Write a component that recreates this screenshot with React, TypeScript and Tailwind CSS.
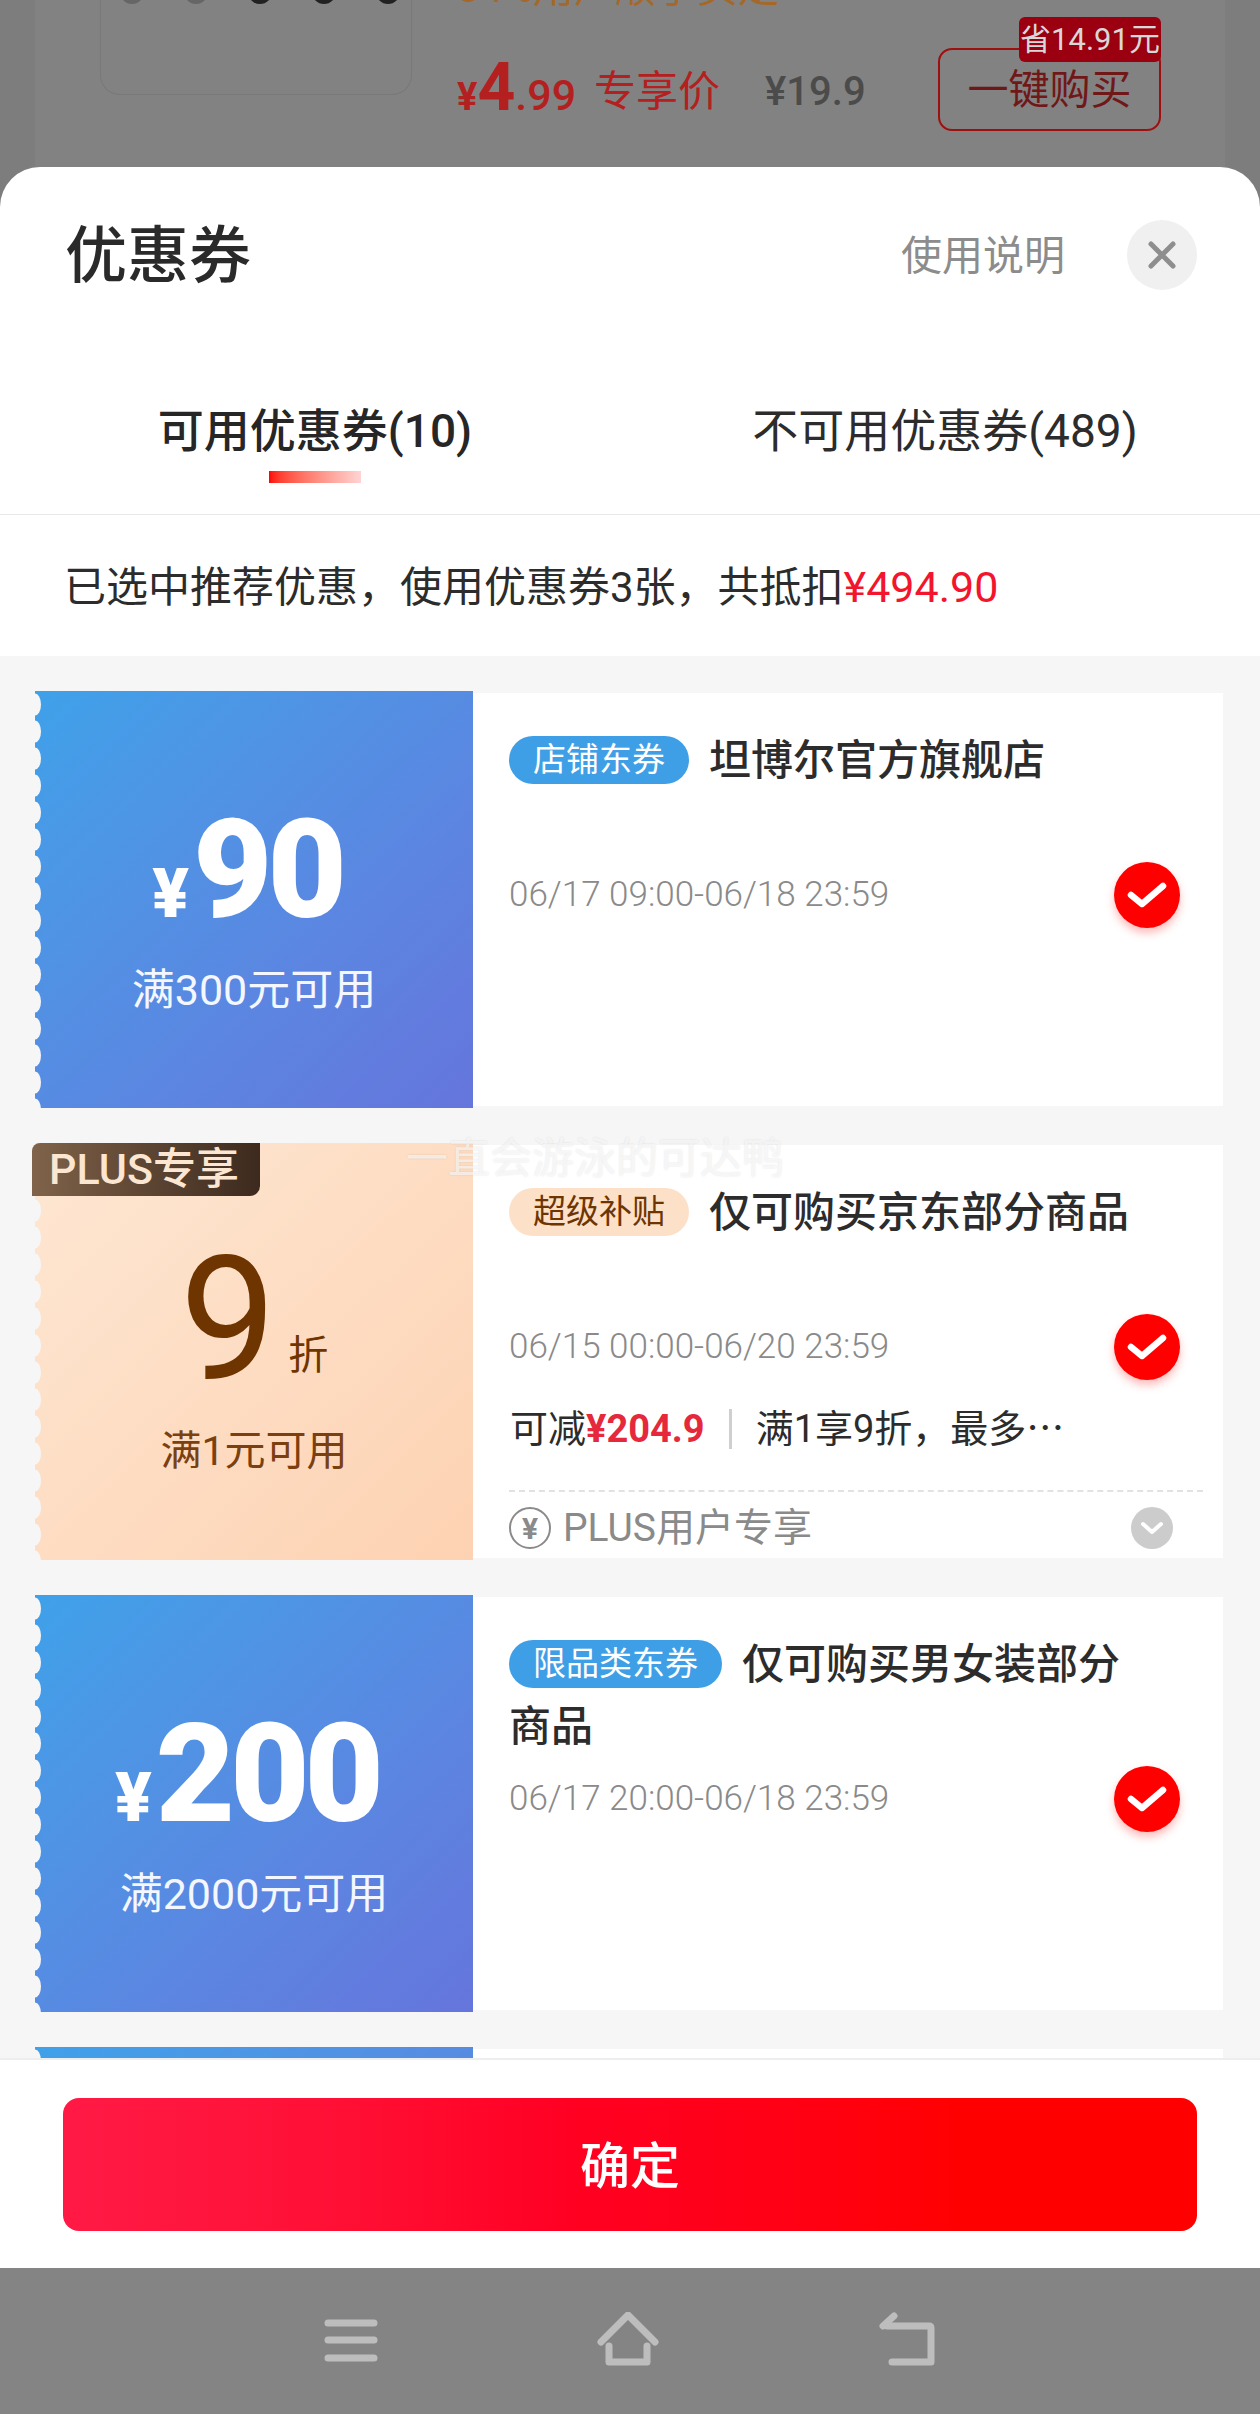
const Scallops = ({ id }: { id: string }) => (
  <svg className="absolute left-0 top-0 h-full w-[8px]" aria-hidden="true">
    <defs>
      <pattern id={id} width="8" height="27" patternUnits="userSpaceOnUse">
        <ellipse cx="0" cy="13.5" rx="6" ry="11" fill="#f6f6f6" />
      </pattern>
    </defs>
    <rect width="8" height="100%" fill={`url(#${id})`} />
  </svg>
);

function Check() {
  return (
    <div className="flex h-[66px] w-[66px] shrink-0 items-center justify-center rounded-full bg-[#ff0000] shadow-[0_5px_8px_rgba(255,60,60,0.35)]">
      <svg width="40" height="30" viewBox="0 0 40 30" fill="none">
        <path d="M4 15l11 9L36 6" stroke="#fff" strokeWidth="6.5" strokeLinecap="round" strokeLinejoin="round" />
      </svg>
    </div>
  );
}

function Card({
  id,
  peach,
  left,
  tag,
  tagClass,
  title,
  date,
  children,
}: {
  id: string;
  peach?: boolean;
  left: React.ReactNode;
  tag: string;
  tagClass: string;
  title: React.ReactNode;
  date: string;
  children?: React.ReactNode;
}) {
  return (
    <div className="ml-[35px] flex h-[417px] w-[1188px] shrink-0">
      <div
        className={
          peach
            ? "relative flex h-full w-[438px] shrink-0 flex-col items-center bg-gradient-to-br from-[#fee7d3] to-[#fdd2b2]"
            : "relative flex h-full w-[438px] shrink-0 flex-col items-center bg-gradient-to-br from-[#3ea1e9] to-[#6575dc]"
        }
      >
        {left}
        <Scallops id={id} />
      </div>
      <div className="my-[2px] flex-1 overflow-hidden bg-white pl-[36px] pt-[37px]">
        <div className="h-[124px] pr-[40px] text-[42px] font-medium leading-[62px] text-[#2c2c2c]">
          <span className={`mr-[20px] inline-block h-[48px] rounded-full px-[24px] align-[4px] text-[33px] font-normal leading-[47px] ${tagClass}`}>
            {tag}
          </span>
          {title}
        </div>
        <div className="mt-[21px] flex h-[40px] items-center justify-between pr-[43px]">
          <span className="text-[35px] font-light leading-[40px] text-[#8a8a8a]">{date}</span>
          <Check />
        </div>
        {children}
      </div>
    </div>
  );
}

function Amount({ value, sub }: { value: string; sub: string }) {
  return (
    <>
      <div className="mt-[111px] mr-[14px] flex h-[137px] items-baseline text-white">
        <span className="mr-[4px] text-[68px] font-black leading-[137px]">¥</span>
        <span className="text-[137px] font-black leading-[137px] tracking-[-5px]">{value}</span>
      </div>
      <div className="mt-[26px] text-[43px] leading-[50px] text-[#f4f7ff]">{sub}</div>
    </>
  );
}

export default function App() {
  return (
    <div className="relative flex h-[2414px] w-[1260px] flex-col overflow-hidden bg-[#7d7d7d] font-[Roboto,'Noto_Sans_CJK_SC',sans-serif]">
      {/* dimmed page behind the sheet */}
      <div className="mx-[35px] h-[167px] shrink-0 overflow-hidden bg-[#828282]">
        <div className="flex">
          <div className="ml-[65px] flex h-[95px] w-[312px] shrink-0 justify-center gap-[40px] rounded-b-[20px] border border-t-0 border-[#797979] pl-[8px]">
            <span className="-mt-[20px] h-[24px] w-[24px] rounded-full bg-[#666666]" />
            <span className="-mt-[20px] h-[24px] w-[24px] rounded-full bg-[#666666]" />
            <span className="-mt-[20px] h-[24px] w-[24px] rounded-full bg-[#222222]" />
            <span className="-mt-[20px] h-[24px] w-[24px] rounded-full bg-[#222222]" />
            <span className="-mt-[20px] h-[24px] w-[24px] rounded-full bg-[#222222]" />
          </div>
          <div className="ml-[45px] flex-1">
            <div className="-mt-[36px] h-[48px] text-[41px] leading-[48px] text-[#a5682a]">84%用户顺手买走</div>
            <div className="mt-[36px] flex h-[83px] items-center pr-[64px]">
              <div className="mt-[4px] flex items-baseline text-[#b42020]">
                <span className="text-[38px] font-bold">¥</span>
                <span className="text-[66px] font-bold leading-[66px]">4</span>
                <span className="text-[43px] font-medium">.99</span>
              </div>
              <span className="ml-[18px] mt-[4px] text-[42px] text-[#b42020]">专享价</span>
              <span className="ml-[45px] mt-[4px] text-[40px] font-medium text-[#4b4b4b]">¥19.9</span>
              <div className="relative ml-auto flex h-[83px] w-[223px] items-center justify-center rounded-[14px] border-2 border-[#9e1010] pt-[3px] text-[41px] text-[#701818]">
                一键购买
                <span className="absolute -right-[2px] -top-[33px] h-[45px] w-[142px] rounded-[6px] bg-[#9a0010] text-center text-[31px] leading-[45px] text-[#d8d8d8]">
                  省14.91元
                </span>
              </div>
            </div>
          </div>
        </div>
      </div>

      {/* sheet */}
      <div className="flex h-[2101px] shrink-0 flex-col overflow-hidden rounded-t-[40px] bg-white">
        <div className="flex h-[175px] shrink-0 items-center pl-[65px] pr-[63px]">
          <h1 className="mt-[4px] text-[62px] font-medium text-[#2a2a2a]">优惠券</h1>
          <span className="ml-auto mr-[62px] mt-[4px] text-[41px] text-[#8c8c8c]">使用说明</span>
          <button className="flex h-[70px] w-[70px] items-center justify-center rounded-full bg-[#f0f0f0]">
            <svg width="30" height="30" viewBox="0 0 30 30" fill="none">
              <path d="M4 4l22 22M26 4L4 26" stroke="#8e8e8e" strokeWidth="5" strokeLinecap="round" />
            </svg>
          </button>
        </div>

        <div className="flex h-[173px] shrink-0 border-b border-[#e8e8e8]">
          <div className="flex w-[630px] flex-col items-center pt-[57px]">
            <span className="text-[46px] font-medium leading-[64px] text-[#262626]">可用优惠券(10)</span>
            <span className="mt-[8px] h-[12px] w-[92px] bg-gradient-to-r from-[#ff0000] to-[#ffd4d4]" />
          </div>
          <div className="w-[630px] pt-[57px] text-center text-[46px] leading-[64px] text-[#2c2c2c]">不可用优惠券(489)</div>
        </div>

        <div className="flex h-[141px] shrink-0 items-center pl-[64px] pt-[4px] text-[42px] text-[#2c2c2c]">
          已选中推荐优惠，使用优惠券3张，共抵扣<span className="text-[43px] text-[#f2152d]">¥494.90</span>
        </div>

        <div className="flex flex-1 flex-col gap-[35px] overflow-hidden bg-[#f6f6f6] pt-[35px]">
          <Card
            id="s1"
            left={<Amount value="90" sub="满300元可用" />}
            tag="店铺东券"
            tagClass="bg-[#3f9fe6] text-white"
            title="坦博尔官方旗舰店"
            date="06/17 09:00-06/18 23:59"
          />

          <Card
            id="s2"
            peach
            left={
              <>
                <div className="mt-[95px] flex h-[165px] items-baseline text-[#6f3500]">
                  <span className="text-[172px] leading-[165px]">9</span>
                  <span className="mb-[27px] ml-[12px] self-end text-[40px] leading-[40px]">折</span>
                </div>
                <div className="mt-[23px] text-[41px] leading-[50px] text-[#7a4010]">满1元可用</div>
                <div className="absolute -left-[3px] top-0 z-10 h-[53px] w-[228px] rounded-tl-[8px] rounded-br-[10px] bg-gradient-to-r from-[#80634a] to-[#3d2a1e] pl-[17px] text-[43px] font-medium leading-[53px] text-[#fbe6d2]">
                  PLUS专享
                </div>
              </>
            }
            tag="超级补贴"
            tagClass="bg-[#fde0c8] text-[#6f3500]"
            title="仅可购买京东部分商品"
            date="06/15 00:00-06/20 23:59"
          >
            <div className="mt-[40px] flex h-[44px] items-center pl-[1px] text-[38px] text-[#2c2c2c]">
              可减<span className="font-bold text-[#e5283c]">¥204.9</span>
              <span className="mx-[24px] h-[40px] w-[3px] bg-[#cfcfcf]" />
              满1享9折，最多⋯
            </div>
            <div className="mr-[20px] mt-[39px] border-t-2 border-dashed border-[#e2e2e2]" />
            <div className="mt-[15px] flex h-[42px] items-center pr-[50px] text-[39px] text-[#8a8a8a]">
              <span className="mr-[12px] flex h-[42px] w-[42px] items-center justify-center rounded-full border-2 border-[#8a8a8a] text-[30px] font-bold">¥</span>
              PLUS用户专享
              <span className="ml-auto flex h-[42px] w-[42px] items-center justify-center rounded-full bg-[#cccccc]">
                <svg width="24" height="14" viewBox="0 0 24 14" fill="none">
                  <path d="M3 3l9 8 9-8" stroke="#fff" strokeWidth="4" strokeLinecap="round" strokeLinejoin="round" />
                </svg>
              </span>
            </div>
          </Card>

          <Card
            id="s3"
            left={<Amount value="200" sub="满2000元可用" />}
            tag="限品类东券"
            tagClass="bg-[#3f9fe6] text-white"
            title={
              <>
                仅可购买男女装部分
                <br />
                商品
              </>
            }
            date="06/17 20:00-06/18 23:59"
          />

          <Card id="s4" left={null} tag="" tagClass="" title="" date="" />
        </div>

        <div className="flex h-[210px] shrink-0 items-center justify-center border-t-2 border-[#eeeeee] pt-[1px]">
          <button className="h-[133px] w-[1134px] rounded-[16px] bg-gradient-to-r from-[#ff1a45] via-[#ff0022] via-45% to-[#ff0000] to-80% pt-[6px] text-[50px] font-medium text-white">
            确定
          </button>
        </div>
      </div>

      {/* system nav */}
      <div className="flex h-[146px] shrink-0 items-start justify-center bg-[#848484] pl-[16px] pt-[44px]">
        <svg width="628" height="54" viewBox="0 0 628 54" fill="none">
          <g stroke="#bdbdbd" strokeWidth="7" strokeLinecap="round" strokeLinejoin="round">
            <path d="M4 11h46M4 28h46M4 46h46" />
            <path d="M277 30L304 3l27 27" />
            <path d="M285 34v16h38V34" />
            <path d="M563 14h42q2 0 2 2v34h-39" />
            <path d="M570 4l-11 10" />
          </g>
        </svg>
      </div>

      {/* screen-recording watermark */}
      <div className="absolute left-[406px] top-[1127px] z-20 text-[42px] text-white/65 [text-shadow:0_0_2px_rgba(0,0,0,0.12)]">
        一直会游泳的可达鸭
      </div>
    </div>
  );
}
